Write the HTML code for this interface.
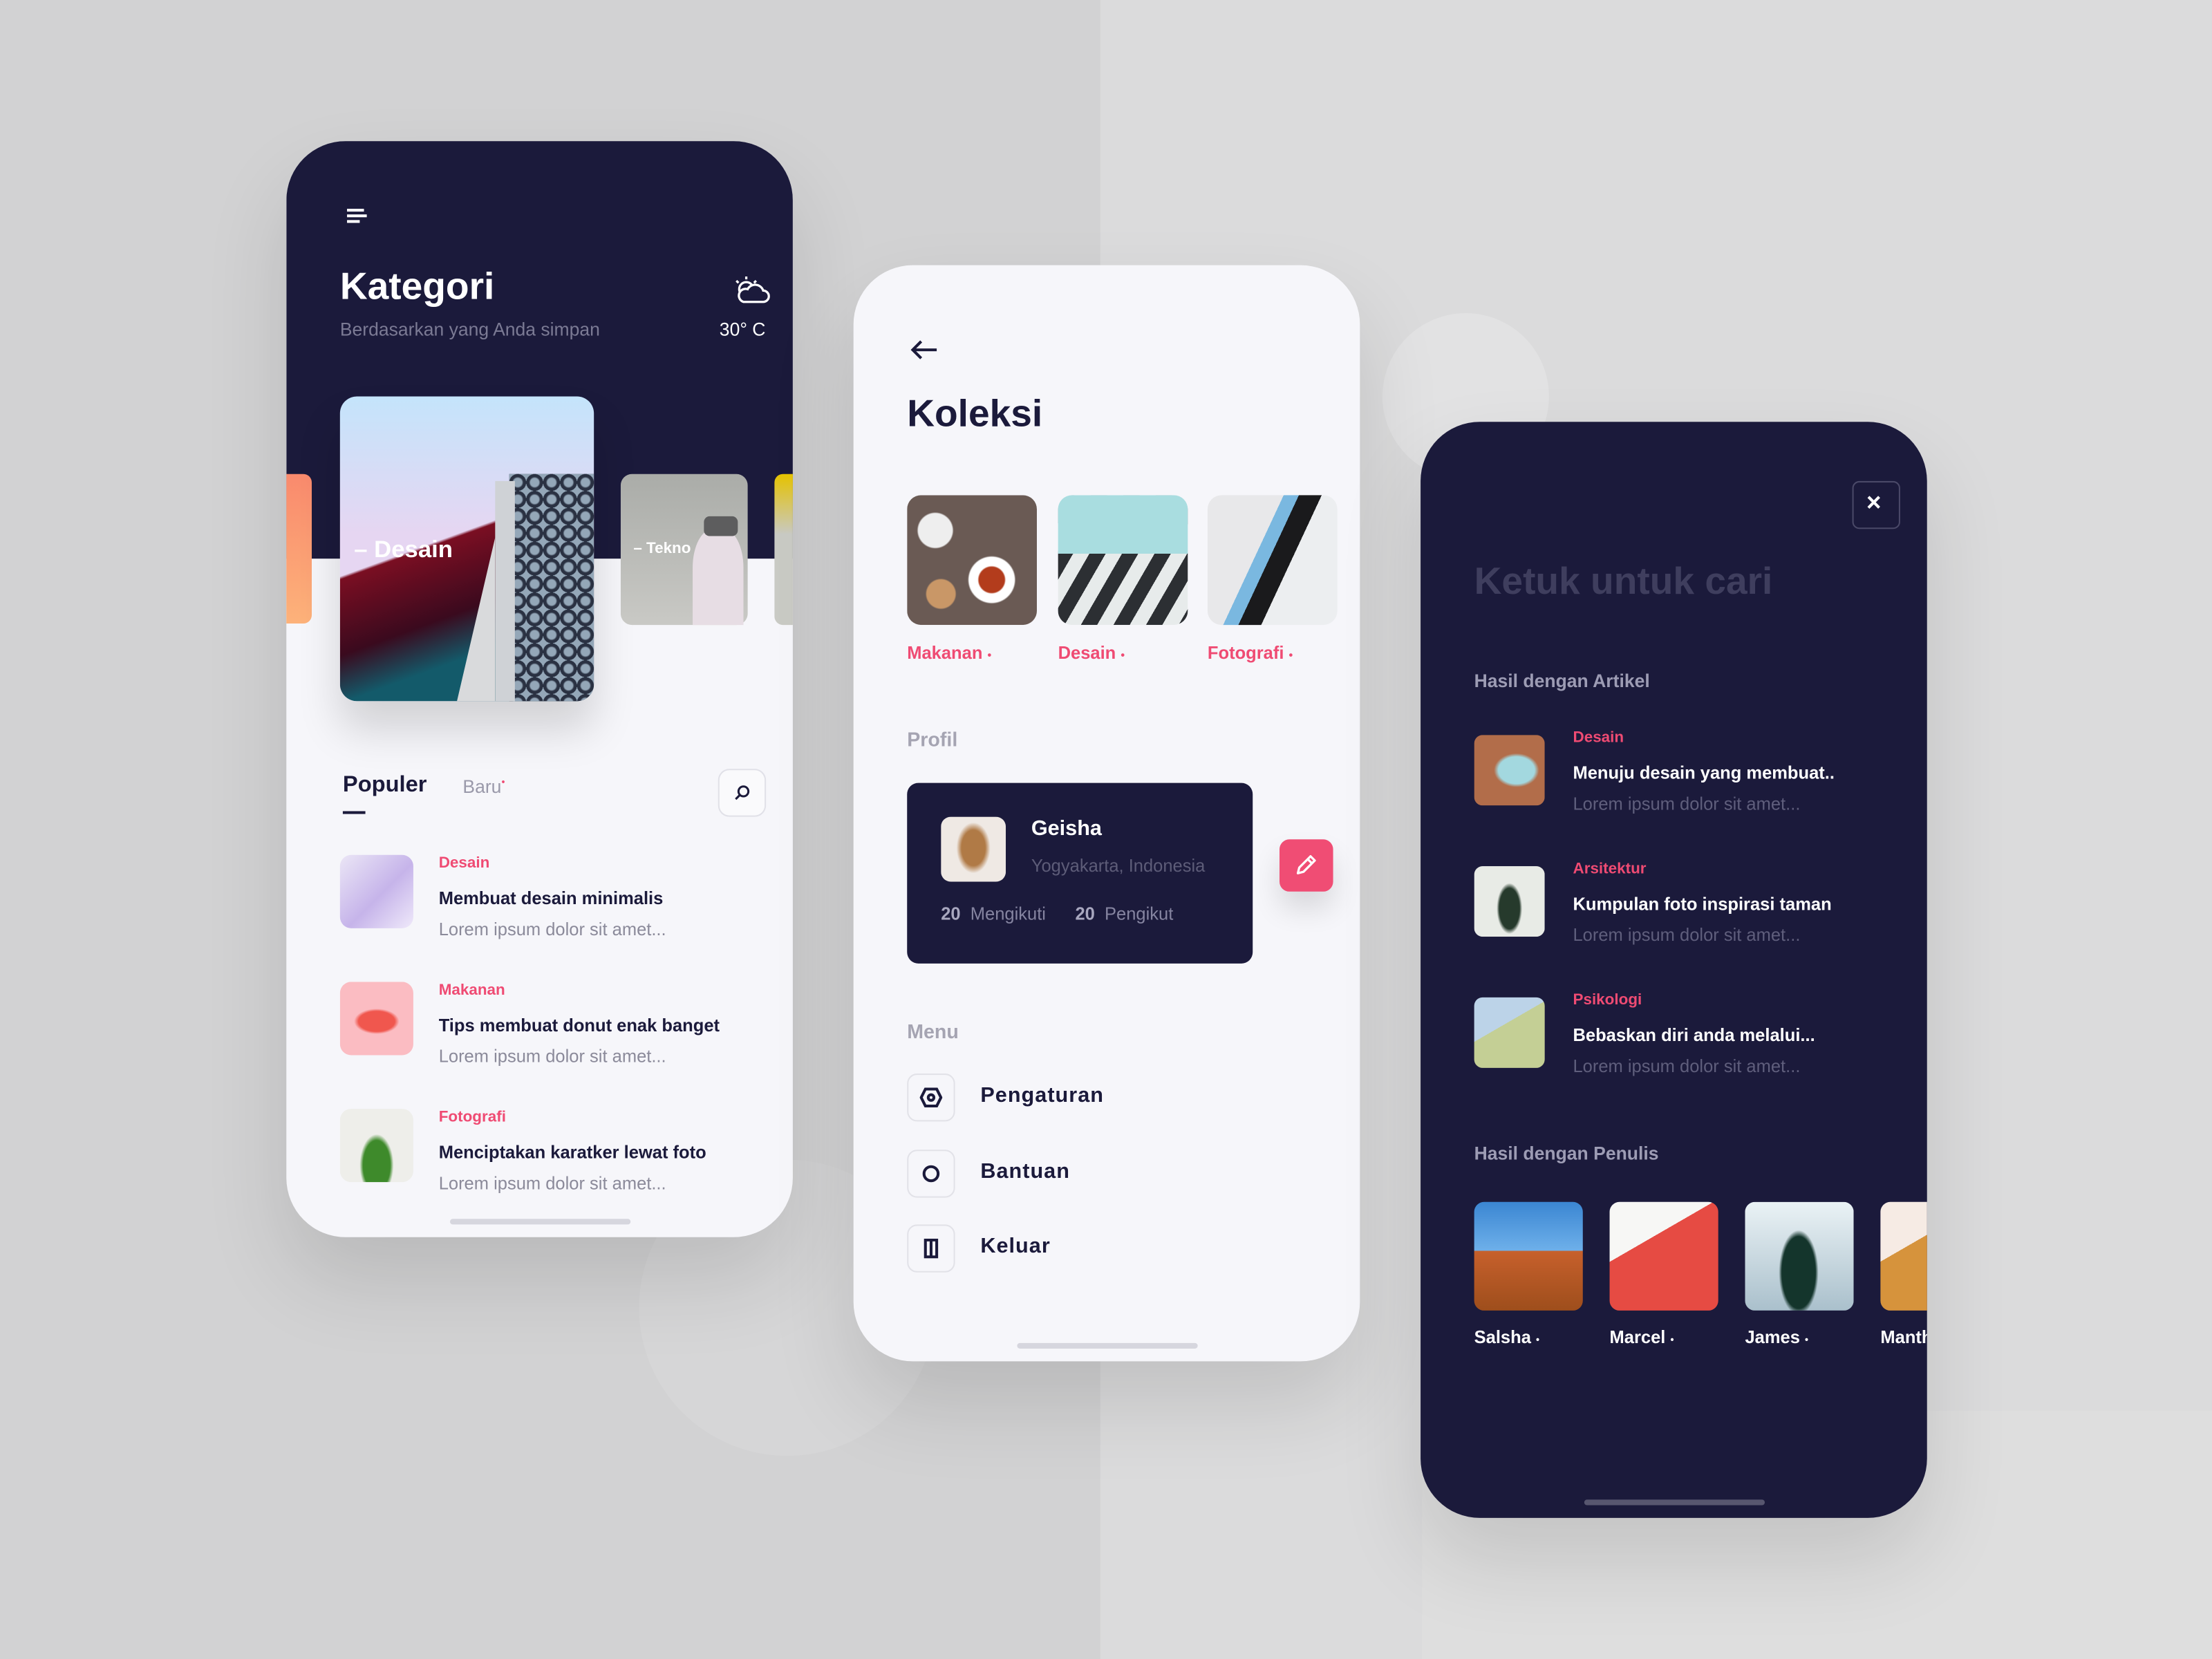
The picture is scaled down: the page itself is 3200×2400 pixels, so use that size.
<!DOCTYPE html>
<html><head><meta charset="utf-8"><style>
*{margin:0;padding:0;box-sizing:border-box}
body{width:3200px;height:2400px;overflow:hidden;background:#d2d2d3;font-family:"Liberation Sans",sans-serif}
#s{position:absolute;left:0;top:0;width:1568px;height:1176px;transform:scale(2.0408);transform-origin:0 0}
.a{position:absolute}
.ph{position:absolute;border-radius:42px;overflow:hidden;box-shadow:0 30px 60px rgba(0,0,0,.12)}
.navy{background:#1b1a3b}
.pink{color:#ef4b73}
.t{position:absolute;white-space:nowrap}
</style></head><body><div id="s">
<div class="a" style="left:780px;top:0;width:788px;height:1176px;background:#dbdbdc"></div>
<div class="a" style="left:1008px;top:1000px;width:560px;height:176px;background:#dedede"></div>
<div class="a" style="left:453px;top:822px;width:210px;height:210px;border-radius:50%;background:#d6d6d7"></div>
<div class="a" style="left:980px;top:222px;width:118px;height:118px;border-radius:50%;background:#e2e2e3"></div>

<!-- Phone 1 -->
<div class="ph" style="left:203px;top:100px;width:359px;height:777px;background:#f6f6fa">
 <div class="a navy" style="left:0;top:0;width:359px;height:296px"></div>
 <div class="a" style="left:43px;top:48px;width:12px;height:2px;background:#fff"></div>
 <div class="a" style="left:43px;top:52px;width:14px;height:2px;background:#fff"></div>
 <div class="a" style="left:43px;top:56px;width:9px;height:2px;background:#fff"></div>
 <div class="t" style="left:38px;top:88px;font-size:27px;font-weight:bold;color:#fff">Kategori</div>
 <div class="t" style="left:38px;top:126px;font-size:13px;color:#7b7a94">Berdasarkan yang Anda simpan</div>
 <svg class="a" style="left:316px;top:94px" width="28" height="26" viewBox="0 0 28 26" fill="none" stroke="#fff" stroke-width="1.6"><circle cx="10" cy="11" r="5"/><path d="M8 20h14a4 4 0 0 0 0-8 6 6 0 0 0-11-1 4 4 0 0 0-3 9z" fill="#1b1a3b"/><path d="M10 2v2M3 5l1.5 1.5M17 5l-1.5 1.5"/></svg>
 <div class="t" style="left:307px;top:126px;font-size:13px;color:#fff">30° C</div>
 <div class="a" style="left:-10px;top:236px;width:28px;height:106px;border-radius:6px;background:linear-gradient(#f98a6d,#fdb27a)"></div>
 <div class="a" style="left:38px;top:181px;width:180px;height:216px;border-radius:12px;overflow:hidden;background:linear-gradient(#c4e4fb,#e6d6f2 45%);box-shadow:0 20px 30px rgba(0,0,0,.15)">
  <div class="a" style="left:0;top:60px;width:180px;height:160px;background:linear-gradient(160deg,transparent 30%,#7a0e22 31%,#3a0a1e 55%,#135a6a 70%)"></div>
  <div class="a" style="left:120px;top:55px;width:60px;height:170px;background:repeating-radial-gradient(circle at 6px 6px,#94a7b8 0 3px,#2a3142 4px 6px);background-size:12px 12px;background-color:#273043"></div>
  <div class="a" style="left:110px;top:60px;width:14px;height:160px;background:#cfd2d6"></div>
  <div class="a" style="left:70px;top:100px;width:40px;height:120px;background:#d9dadc;clip-path:polygon(100% 0,100% 100%,30% 100%)"></div>
 </div>
 <div class="t" style="left:48px;top:280px;font-size:17px;font-weight:bold;color:#fff">– Desain</div>
 <div class="a" style="left:237px;top:236px;width:90px;height:107px;border-radius:8px;background:linear-gradient(#aaaca8,#c9c9c5)"></div>
 <div class="a" style="left:288px;top:275px;width:36px;height:68px;border-radius:40% 40% 0 0;background:#e7dde4"></div>
 <div class="a" style="left:296px;top:266px;width:24px;height:14px;border-radius:4px;background:#5d5d5e"></div>
 <div class="t" style="left:246px;top:283px;font-size:11px;font-weight:bold;color:#fff">– Tekno</div>
 <div class="a" style="left:346px;top:236px;width:20px;height:107px;border-radius:6px;background:linear-gradient(#e6c300,#c9cac4 40%)"></div>
 <div class="t" style="left:40px;top:448px;font-size:16px;font-weight:bold;color:#1b1a3b">Populer</div>
 <div class="a" style="left:40px;top:475px;width:16px;height:2px;background:#1b1a3b"></div>
 <div class="t" style="left:125px;top:450px;font-size:13px;color:#9a99aa">Baru<sup style="font-size:7px;color:#ef4b73">•</sup></div>
 <div class="a" style="left:306px;top:445px;width:34px;height:34px;border-radius:8px;border:1px solid #e1e1e8;background:#fafafc"></div>
 <svg class="a" style="left:317px;top:456px" width="12" height="12" viewBox="0 0 12 12" fill="none" stroke="#1b1a3b" stroke-width="1.5"><circle cx="7" cy="5" r="3.5"/><path d="M4.5 7.5L1.5 10.5"/></svg>
 <div class="a" style="left:38px;top:506px;width:52px;height:52px;border-radius:8px;background:linear-gradient(135deg,#ebe6f6,#c6b4ea 55%,#efe9fa)"></div>
 <div class="t pink" style="left:108px;top:506px;font-size:11px;font-weight:bold">Desain</div>
 <div class="t" style="left:108px;top:530px;font-size:12.5px;font-weight:bold;color:#1b1a3b">Membuat desain minimalis</div>
 <div class="t" style="left:108px;top:552px;font-size:12.5px;color:#8b8a9a">Lorem ipsum dolor sit amet...</div>
 <div class="a" style="left:38px;top:596px;width:52px;height:52px;border-radius:8px;background:radial-gradient(ellipse 16px 9px at 26px 28px,#f0574e 80%,transparent 100%),#fbbcc2"></div>
 <div class="t pink" style="left:108px;top:596px;font-size:11px;font-weight:bold">Makanan</div>
 <div class="t" style="left:108px;top:620px;font-size:12.5px;font-weight:bold;color:#1b1a3b">Tips membuat donut enak banget</div>
 <div class="t" style="left:108px;top:642px;font-size:12.5px;color:#8b8a9a">Lorem ipsum dolor sit amet...</div>
 <div class="a" style="left:38px;top:686px;width:52px;height:52px;border-radius:8px;background:radial-gradient(ellipse 12px 22px at 26px 40px,#3e8a2b 80%,transparent 100%),#eeeeea"></div>
 <div class="t pink" style="left:108px;top:686px;font-size:11px;font-weight:bold">Fotografi</div>
 <div class="t" style="left:108px;top:710px;font-size:12.5px;font-weight:bold;color:#1b1a3b">Menciptakan karatker lewat foto</div>
 <div class="t" style="left:108px;top:732px;font-size:12.5px;color:#8b8a9a">Lorem ipsum dolor sit amet...</div>
 <div class="a" style="left:116px;top:764px;width:128px;height:4px;border-radius:2px;background:#d6d6de"></div>
</div>

<!-- Phone 2 -->
<div class="ph" style="left:605px;top:188px;width:359px;height:777px;background:#f6f6fa">
 <svg class="a" style="left:40px;top:52px" width="20" height="16" viewBox="0 0 20 16" fill="none" stroke="#1b1a3b" stroke-width="2"><path d="M19 8H2M8 2L2 8l6 6"/></svg>
 <div class="t" style="left:38px;top:90px;font-size:27px;font-weight:bold;color:#1b1a3b">Koleksi</div>
 <div class="a" style="left:38px;top:163px;width:92px;height:92px;border-radius:10px;background:radial-gradient(circle at 20px 25px,#eee 12px,transparent 13px),radial-gradient(circle at 60px 60px,#b33c1c 9px,#fff 10px,#fff 16px,transparent 17px),radial-gradient(circle at 24px 70px,#c99767 10px,transparent 11px),#6a5a54"></div>
 <div class="a" style="left:145px;top:163px;width:92px;height:92px;border-radius:10px;background:linear-gradient(#a9dde0 45%,transparent 45%),repeating-linear-gradient(120deg,#2c2f33 0 10px,#e7ebeb 10px 20px)"></div>
 <div class="a" style="left:251px;top:163px;width:92px;height:92px;border-radius:10px;background:linear-gradient(115deg,#e8e8ea 40%,#7ab8e0 40% 48%,#1a1a1c 48% 60%,#eceef0 60%)"></div>
 <div class="t pink" style="left:38px;top:268px;font-size:12.5px;font-weight:bold">Makanan <span style="font-size:8px">•</span></div>
 <div class="t pink" style="left:145px;top:268px;font-size:12.5px;font-weight:bold">Desain <span style="font-size:8px">•</span></div>
 <div class="t pink" style="left:251px;top:268px;font-size:12.5px;font-weight:bold">Fotografi <span style="font-size:8px">•</span></div>
 <div class="t" style="left:38px;top:328px;font-size:14px;font-weight:bold;color:#a5a4b2">Profil</div>
 <div class="a navy" style="left:38px;top:367px;width:245px;height:128px;border-radius:8px"></div>
 <div class="a" style="left:62px;top:391px;width:46px;height:46px;border-radius:7px;background:radial-gradient(ellipse 12px 18px at 23px 22px,#b07a46 70%,transparent 100%),#efe9e4"></div>
 <div class="t" style="left:126px;top:391px;font-size:15px;font-weight:bold;color:#fff">Geisha</div>
 <div class="t" style="left:126px;top:419px;font-size:12.5px;color:#5d5c78">Yogyakarta, Indonesia</div>
 <div class="t" style="left:62px;top:453px;font-size:12.5px;color:#8584a0"><b style="color:#a8a7bf">20</b>&nbsp; Mengikuti &nbsp;&nbsp;&nbsp;&nbsp; <b style="color:#a8a7bf">20</b>&nbsp; Pengikut</div>
 <div class="a" style="left:302px;top:407px;width:38px;height:37px;border-radius:7px;background:#f04d74;box-shadow:0 12px 20px rgba(0,0,0,.12)"></div>
 <svg class="a" style="left:312px;top:416px" width="18" height="18" viewBox="0 0 18 18" fill="none" stroke="#fff" stroke-width="1.6" stroke-linejoin="round"><path d="M3 15l1-4 8-8 3 3-8 8z M10 5l3 3"/></svg>
 <div class="t" style="left:38px;top:535px;font-size:14px;font-weight:bold;color:#a5a4b2">Menu</div>
 <div class="a" style="left:38px;top:573px;width:34px;height:34px;border-radius:7px;border:1px solid #e2e2e8"></div>
 <svg class="a" style="left:47px;top:582px" width="16" height="16" viewBox="0 0 16 16" fill="none" stroke="#1b1a3b" stroke-width="2"><path d="M4 2h8l3 6-3 6H4L1 8z"/><circle cx="8" cy="8" r="2"/></svg>
 <div class="t" style="left:90px;top:580px;font-size:15px;font-weight:bold;color:#1b1a3b;letter-spacing:.5px">Pengaturan</div>
 <div class="a" style="left:38px;top:627px;width:34px;height:34px;border-radius:7px;border:1px solid #e2e2e8"></div>
 <svg class="a" style="left:48px;top:637px" width="14" height="14" viewBox="0 0 14 14" fill="none" stroke="#1b1a3b" stroke-width="2"><circle cx="7" cy="7" r="5"/></svg>
 <div class="t" style="left:90px;top:634px;font-size:15px;font-weight:bold;color:#1b1a3b;letter-spacing:.5px">Bantuan</div>
 <div class="a" style="left:38px;top:680px;width:34px;height:34px;border-radius:7px;border:1px solid #e2e2e8"></div>
 <svg class="a" style="left:48px;top:690px" width="14" height="14" viewBox="0 0 14 14" fill="none" stroke="#1b1a3b" stroke-width="2"><path d="M3 1h8v12H3zM7 1v12"/></svg>
 <div class="t" style="left:90px;top:687px;font-size:15px;font-weight:bold;color:#1b1a3b;letter-spacing:.5px">Keluar</div>
 <div class="a" style="left:116px;top:764px;width:128px;height:4px;border-radius:2px;background:#d6d6de"></div>
</div>

<!-- Phone 3 -->
<div class="ph navy" style="left:1007px;top:299px;width:359px;height:777px">
 <div class="a" style="left:306px;top:42px;width:34px;height:34px;border-radius:5px;border:1px solid #4a4968"></div>
 <div class="t" style="left:316px;top:47px;font-size:18px;font-weight:bold;color:#fff">×</div>
 <div class="t" style="left:38px;top:98px;font-size:27px;font-weight:bold;color:#3f3e5e">Ketuk untuk cari</div>
 <div class="t" style="left:38px;top:176px;font-size:13px;font-weight:bold;color:#9d9cb4">Hasil dengan Artikel</div>
 <div class="a" style="left:38px;top:222px;width:50px;height:50px;border-radius:6px;background:radial-gradient(ellipse 16px 12px at 30px 25px,#a3d8df 80%,transparent 100%),#b26d4a"></div>
 <div class="t pink" style="left:108px;top:218px;font-size:11px;font-weight:bold">Desain</div>
 <div class="t" style="left:108px;top:242px;font-size:12.5px;font-weight:bold;color:#fff">Menuju desain yang membuat..</div>
 <div class="t" style="left:108px;top:264px;font-size:12.5px;color:#5f5e7c">Lorem ipsum dolor sit amet...</div>
 <div class="a" style="left:38px;top:315px;width:50px;height:50px;border-radius:6px;background:radial-gradient(ellipse 9px 18px at 25px 30px,#263a2c 80%,transparent 100%),#e8ebe6"></div>
 <div class="t pink" style="left:108px;top:311px;font-size:11px;font-weight:bold">Arsitektur</div>
 <div class="t" style="left:108px;top:335px;font-size:12.5px;font-weight:bold;color:#fff">Kumpulan foto inspirasi taman</div>
 <div class="t" style="left:108px;top:357px;font-size:12.5px;color:#5f5e7c">Lorem ipsum dolor sit amet...</div>
 <div class="a" style="left:38px;top:408px;width:50px;height:50px;border-radius:6px;background:linear-gradient(150deg,#bcd3e8 40%,#c4cf95 40%)"></div>
 <div class="t pink" style="left:108px;top:404px;font-size:11px;font-weight:bold">Psikologi</div>
 <div class="t" style="left:108px;top:428px;font-size:12.5px;font-weight:bold;color:#fff">Bebaskan diri anda melalui...</div>
 <div class="t" style="left:108px;top:450px;font-size:12.5px;color:#5f5e7c">Lorem ipsum dolor sit amet...</div>
 <div class="t" style="left:38px;top:511px;font-size:13px;font-weight:bold;color:#9d9cb4">Hasil dengan Penulis</div>
 <div class="a" style="left:38px;top:553px;width:77px;height:77px;border-radius:7px;background:linear-gradient(#3b86d2,#6eb0ea 45%,#c7602c 45%,#9e4e1c)"></div>
 <div class="a" style="left:134px;top:553px;width:77px;height:77px;border-radius:7px;background:linear-gradient(150deg,#f7f7f5 35%,#e64b43 35%)"></div>
 <div class="a" style="left:230px;top:553px;width:77px;height:77px;border-radius:7px;background:radial-gradient(ellipse 14px 30px at 38px 50px,#14352c 85%,transparent 100%),linear-gradient(#eaf2f5,#aac0cc)"></div>
 <div class="a" style="left:326px;top:553px;width:50px;height:77px;border-radius:7px;background:linear-gradient(150deg,#f6ebe4 40%,#d6933c 40%)"></div>
 <div class="t" style="left:38px;top:642px;font-size:12.5px;font-weight:bold;color:#fff">Salsha <span style="font-size:7px">•</span></div>
 <div class="t" style="left:134px;top:642px;font-size:12.5px;font-weight:bold;color:#fff">Marcel <span style="font-size:7px">•</span></div>
 <div class="t" style="left:230px;top:642px;font-size:12.5px;font-weight:bold;color:#fff">James <span style="font-size:7px">•</span></div>
 <div class="t" style="left:326px;top:642px;font-size:12.5px;font-weight:bold;color:#fff">Manth</div>
 <div class="a" style="left:116px;top:764px;width:128px;height:4px;border-radius:2px;background:#57566f"></div>
</div>
</div></body></html>
